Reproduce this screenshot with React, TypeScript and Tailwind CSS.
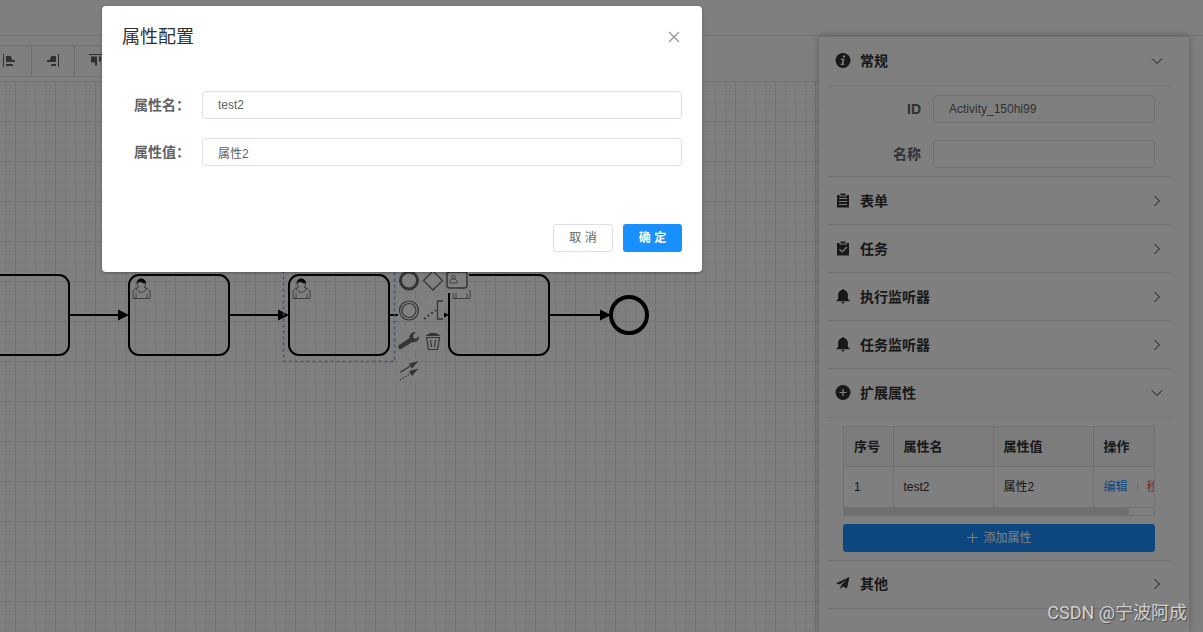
import React from "react";

interface SectionProps {
    title: string;
    icon: React.ReactNode;
    open?: boolean;
    children?: React.ReactNode;
}

const InfoIcon = () => (
    <svg width="16" height="16" viewBox="0 0 16 16">
        <circle cx="8" cy="7.500" r="7.500" fill="#303133" />
        <path d="M8.2 2.500h2.100l-.4 2H7.800zM6 5.700h3.500l-1.100 5h1l-.3 1.400H5.600l.3-1.400h.8l.8-3.600H5.700z" fill="#fff" />
    </svg>
);

const FormIcon = () => (
    <svg width="16" height="16" viewBox="0 0 16 16">
        <path d="M2 2h2.500v1.500h7V2H14v12.500H2zM5.500 .5h5v2h-5z" fill="#303133" />
        <path d="M4 5.500h8M4 8.500h8M4 11.500h8" stroke="#fff" />
    </svg>
);

const TaskIcon = () => (
    <svg width="16" height="16" viewBox="0 0 16 16">
        <path d="M2 2h2.500v1.500h7V2H14v12.500H2zM5.500 .5h5v2h-5z" fill="#303133" />
        <path d="M4.500 8.300l2.600 2.600 4.800-4.900" stroke="#fff" strokeWidth="1.300" fill="none" />
    </svg>
);

const BellIcon = () => (
    <svg width="16" height="16" viewBox="0 0 16 16">
        <path
            d="M7.200 1V0h1.600v1C11.400 1.400 12.900 3.400 12.900 5.900V10l1.700 1.500v.7H1.400v-.7L3.100 10V5.900C3.100 3.400 4.600 1.400 7.200 1zM6 13h4L8 14.700z"
            fill="#303133"
        />
    </svg>
);

const PlusIcon = () => (
    <svg width="16" height="16" viewBox="0 0 16 16">
        <circle cx="8" cy="7.500" r="7.500" fill="#303133" />
        <path d="M8 4v7M4.500 7.500h7" stroke="#fff" strokeWidth="1.200" />
    </svg>
);

const PlaneIcon = () => (
    <svg width="16" height="16" viewBox="0 0 16 16">
        <path d="M14.500 1L1 7.200l3.700 1.300 6.800-4.800-5.300 5.600-1.700 4.200 3.200-3 4.300 2z" fill="#303133" />
    </svg>
);

const Chevron = ({ open }: { open?: boolean }) => (
    <svg width="12" height="12" viewBox="0 0 12 12" fill="none" stroke="#303133">
        <path d={open ? "M1 3.500l5 5 5-5" : "M3.500 1l5 5-5 5"} />
    </svg>
);

const Section = ({ title, icon, open, children }: SectionProps) => (
    <section className="border-b border-[#dfe3ec]">
        <button
            type="button"
            aria-expanded={!!open}
            className={`flex w-full items-center px-2 text-left text-sm font-bold text-[#303133] ${
                open ? "h-12" : "h-[47px]"
            }`}
        >
            {icon}
            <span className="ml-[9px] flex-1">{title}</span>
            <Chevron open={open} />
        </button>
        {open && <div className="border-t border-[#ebeef5] px-4 pb-2">{children}</div>}
    </section>
);

const UserTask = ({ x }: { x: number }) => (
    <g transform={`translate(${x} 194)`}>
        <rect width="100" height="80" rx="10" fill="none" stroke="#000" strokeWidth="2" />
        <g fill="#fff" stroke="#000" strokeWidth="0.5">
            <path d="m15,12c.909,-.845 1.594,-2.049 1.594,-3.385 0,-2.554 -1.805,-4.622 -4.357,-4.622 -2.552,0 -4.288,2.068 -4.288,4.622 0,1.348 .974,2.562 1.896,3.405 -.529,.187 -5.669,2.097 -5.794,4.756v6.718h17v-6.718c0,-2.298 -5.528,-4.595 -6.051,-4.776zm-8,6v5.500m11,0v-5" />
            <path d="m17.162,13.009c0,2.447 -2.158,4.431 -4.821,4.431 -2.665,0 -4.822,-1.981 -4.822,-4.431" />
            <path
                d="m8.100,8.200c0,0 2.251,-2.358 4.274,-1.177 2.024,1.181 4.221,1.537 4.124,.965 -.098,-.570 -.117,-3.791 -4.191,-4.136 -3.575,.001 -4.208,3.367 -4.207,4.348z"
                fill="#000"
            />
        </g>
    </g>
);

const Flow = ({ from, to }: { from: number; to: number }) => (
    <g>
        <path d={`M${from} 234H${to - 5}`} stroke="#000" strokeWidth="2" />
        <path d={`M${to} 234l-11 -5.500v11z`} />
    </g>
);

// Quick action icons next to the selected task
const ContextPad = () => (
    <g stroke="#6a6a6a" fill="none">
        <g fill="#fff" stroke="none">
            <rect x="398" y="188" width="22" height="22" />
            <rect x="422" y="188" width="22" height="22" />
            <rect x="446" y="188" width="23" height="24" />
            <rect x="398" y="218" width="46" height="22" />
            <rect x="398" y="248" width="46" height="22" />
            <rect x="398" y="278" width="22" height="22" />
        </g>
        <circle cx="409" cy="199.500" r="8.500" strokeWidth="3" />
        <path d="M433 190l9.500 9.500-9.500 9.500-9.500-9.500z" strokeWidth="1.300" />
        <rect x="447" y="191" width="20" height="16" rx="2.500" strokeWidth="1.500" />
        <path d="M450 202v-2.500l2-1.500h3l2 1.500v2.500z" strokeWidth="0.8" />
        <circle cx="453.500" cy="196" r="1.800" strokeWidth="0.8" />
        <circle cx="409" cy="229.500" r="9.500" strokeWidth="1.200" />
        <circle cx="409" cy="229.500" r="7" strokeWidth="1.200" />
        <path d="M424 238l12-9" strokeWidth="2" strokeDasharray="2 2.500" />
        <path d="M443 220h-5.500v18h5.500" strokeWidth="1.300" />
        <path
            d="M398.800 264.200L409.500 257c-.5-3.500 2.500-6.300 6.500-5.500l-3 2.500 .5 3 2.800 .7 2.700-2.700c.6 4-2.800 7-6.500 6l-11.800 7.300c-1.800 .6-3.200-2.300-1.900-4.100z"
            fill="#6a6a6a"
            stroke="none"
        />
        <path d="M425.500 255c1.500-2 4-1.500 4-3h7c0 1.500 2.500 1 4 3z" fill="#6a6a6a" stroke="none" />
        <path d="M426.500 256.500h13l-2 12h-9zM430.500 259l1 7M435.500 259l-1 7" strokeWidth="1.200" />
        <path d="M400 291.500l12-7.500" strokeWidth="1.300" />
        <path d="M400 299l12-7.500" strokeWidth="1.300" strokeDasharray="1.500 1.500" />
        <path d="M418.500 280l-9.500 2.500 3 5zM418.500 287.500l-9.500 2.500 3 5z" fill="#6a6a6a" stroke="none" />
    </g>
);

const Diagram = () => (
    <svg className="min-h-0 w-full flex-1" aria-label="流程图">
        <defs>
            <pattern id="grid" x="15" y="0" width="40" height="40" patternUnits="userSpaceOnUse">
                <path d="M10.500 0v40M20.500 0v40M30.500 0v40M0 10.500h40M0 20.500h40M0 30.500h40" stroke="#f3f3f3" />
                <path d="M.500 0v40M0 .500h40" stroke="#e4e4e4" />
            </pattern>
        </defs>
        <rect width="100%" height="100%" fill="url(#grid)" />
        <UserTask x={-31} />
        <UserTask x={129} />
        <UserTask x={289} />
        <UserTask x={449} />
        <Flow from={69} to={129} />
        <Flow from={229} to={289} />
        <Flow from={389} to={449} />
        <Flow from={549} to={611} />
        <circle cx="629" cy="234" r="18" fill="none" stroke="#000" strokeWidth="4" />
        <rect
            x="283.500"
            y="188.500"
            width="111"
            height="92"
            fill="none"
            stroke="#8aaeee"
            strokeWidth="1.500"
            strokeDasharray="3 3"
        />
        <ContextPad />
    </svg>
);

const toolbarItems = [
    { name: "左对齐", line: "M1.500 1v13", bars: "M4 4h5M4 8h9M4 12h7M4 6h6" },
    { name: "右对齐", line: "M13.500 1v13", bars: "M11 4H6M11 8H2M11 12H6M11 6H5" },
    { name: "上对齐", line: "M1 1.500h14", bars: "M4 3.500v6M8 3.500v9M12 3.500v5M6 3.500v6" },
];

const Toolbar = () => (
    <div className="-ml-[11px] flex h-[45px] items-end pb-1">
        {toolbarItems.map((item) => (
            <button
                key={item.name}
                type="button"
                aria-label={item.name}
                className="flex h-8 w-[43px] items-center justify-center border-y border-r border-[#dcdfe6]"
            >
                <svg width="16" height="16" viewBox="0 0 16 16" fill="none" stroke="#606266">
                    <path d={item.line} />
                    <path d={item.bars} strokeWidth="2" />
                </svg>
            </button>
        ))}
    </div>
);

const inputClass = "h-7 min-w-0 flex-1 rounded border border-[#dcdfe6] bg-white px-[15px] text-xs text-[#606266]";

const PropertiesPanel = () => (
    <aside className="mr-[14px] w-[370px] shrink-0 overflow-hidden border-t border-[#dfe3ec] bg-white pr-[18px] pl-2 shadow-[0_0_8px_#bbb]">
        <Section title="常规" icon={<InfoIcon />} open>
            <div className="flex items-center pt-[9px]">
                <label htmlFor="node-id" className="w-[90px] pr-3 text-right text-sm font-bold text-[#606266]">ID</label>
                <input id="node-id" className={inputClass} defaultValue="Activity_150hi99" />
            </div>
            <div className="flex items-center pt-[17px]">
                <label htmlFor="node-name" className="w-[90px] pr-3 text-right text-sm font-bold text-[#606266]">名称</label>
                <input id="node-name" className={inputClass} />
            </div>
        </Section>
        <Section title="表单" icon={<FormIcon />} />
        <Section title="任务" icon={<TaskIcon />} />
        <Section title="执行监听器" icon={<BellIcon />} />
        <Section title="任务监听器" icon={<BellIcon />} />
        <Section title="扩展属性" icon={<PlusIcon />} open>
            <div className="mt-2 overflow-hidden border border-[#dfe3ec]">
                <table className="w-[341px] table-fixed text-left text-xs text-[#303133]">
                    <thead>
                        <tr className="h-[39px] border-b border-[#dfe3ec] bg-[#f8f8f9] text-[13px]">
                            <th className="w-[49px] border-r border-[#dfe3ec] px-[10px]">序号</th>
                            <th className="w-[100px] border-r border-[#dfe3ec] px-[10px]">属性名</th>
                            <th className="w-[100px] border-r border-[#dfe3ec] px-[10px]">属性值</th>
                            <th className="px-[10px]">操作</th>
                        </tr>
                    </thead>
                    <tbody>
                        <tr className="h-[41px] border-b border-[#dfe3ec]">
                            <td className="border-r border-[#dfe3ec] px-[10px]">1</td>
                            <td className="border-r border-[#dfe3ec] px-[10px]">test2</td>
                            <td className="border-r border-[#dfe3ec] px-[10px]">属性2</td>
                            <td className="px-[10px]">
                                <div className="flex items-center">
                                    <button type="button" className="text-[#1890ff]">编辑</button>
                                    <span className="mx-[9px] h-3 w-px bg-[#dcdfe6]" />
                                    <button type="button" className="shrink-0 text-[#ff4d4f]">移除</button>
                                </div>
                            </td>
                        </tr>
                    </tbody>
                </table>
                <div className="h-[7px]">
                    <div className="h-full w-[92%] rounded-r-full bg-[#dddee0]" />
                </div>
            </div>
            <button
                type="button"
                className="mt-2 flex h-7 w-full items-center justify-center gap-[5px] rounded-[3px] bg-[#1890ff] text-xs text-white"
            >
                <svg width="12" height="12" viewBox="0 0 12 12" stroke="#fff">
                    <path d="M6.500 1v10M1 5.500h11" />
                </svg>
                添加属性
            </button>
        </Section>
        <Section title="其他" icon={<PlaneIcon />} />
    </aside>
);

const fields = [
    { id: "prop-name", label: "属性名：", value: "test2" },
    { id: "prop-value", label: "属性值：", value: "属性2" },
];

const PropertyDialog = () => (
    <div
        role="dialog"
        aria-labelledby="dialog-title"
        className="absolute top-[6px] left-[102px] w-[600px] rounded-sm bg-white px-5 pb-5 shadow-[0_1px_3px_rgba(0,0,0,0.3)]"
    >
        <div className="flex items-center justify-between pt-[19px] pr-[2px]">
            <h2 id="dialog-title" className="text-lg leading-6 text-[#303133]">属性配置</h2>
            <button type="button" aria-label="关闭">
                <svg width="12" height="12" viewBox="0 0 12 12" stroke="#909399" strokeWidth="1.200">
                    <path d="M1 1l10 10M11 1L1 11" />
                </svg>
            </button>
        </div>
        <form className="flex flex-col gap-[19px] pt-[42px]">
            {fields.map((field) => (
                <div key={field.id} className="flex items-center">
                    <label htmlFor={field.id} className="w-20 pr-3 text-right text-sm font-bold text-[#606266]">
                        {field.label}
                    </label>
                    <input id={field.id} className={inputClass} defaultValue={field.value} />
                </div>
            ))}
        </form>
        <div className="flex justify-end gap-[10px] pt-[58px] text-xs">
            <button type="button" className="h-7 w-[60px] rounded-[3px] border border-[#dcdfe6] text-[#606266]">取 消</button>
            <button type="button" className="h-7 w-[59px] rounded-[3px] bg-[#1890ff] font-bold text-white">确 定</button>
        </div>
    </div>
);

export default function App() {
    return (
        <div className="relative flex h-screen flex-col overflow-hidden bg-white font-['Liberation_Sans','Noto_Sans_CJK_SC',sans-serif]">
            <header className="h-9 shrink-0 border-b border-[#dcdfe6]" />
            <main className="flex min-h-0 flex-1">
                <div className="flex min-w-0 flex-1 flex-col">
                    <Toolbar />
                    <Diagram />
                </div>
                <PropertiesPanel />
            </main>

            {/* Mask */}
            <div className="absolute inset-0 bg-black/50" />
            <PropertyDialog />
            <div className="absolute right-4 bottom-[7px] font-[Roboto,'Noto_Sans_CJK_SC',sans-serif] text-lg leading-6 text-[#d0d0d0] [text-shadow:1px_1px_1px_#444]">
                CSDN @宁波阿成
            </div>
        </div>
    );
}
